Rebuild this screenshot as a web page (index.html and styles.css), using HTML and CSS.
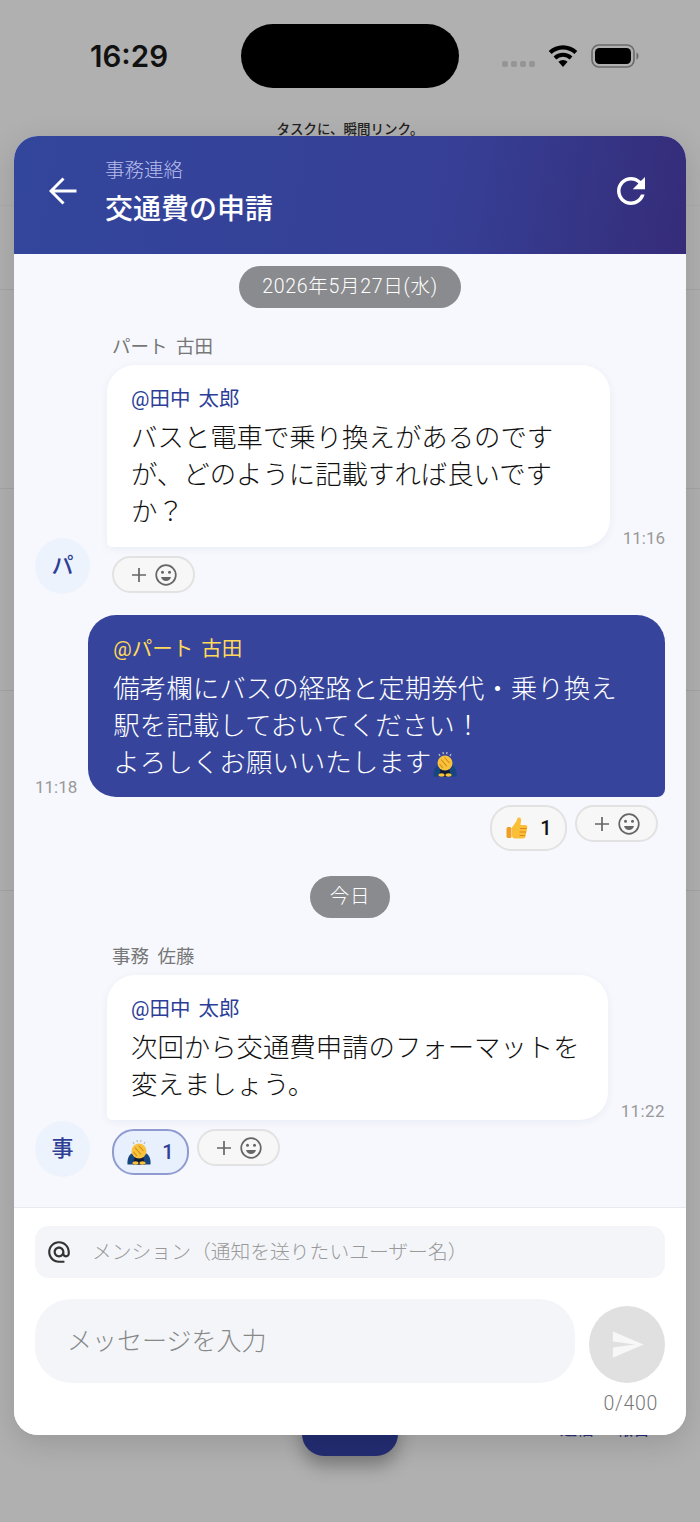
FILE: index.html
```html
<!DOCTYPE html>
<html lang="ja">
<head>
<meta charset="utf-8">
<title>交通費の申請</title>
<link rel="stylesheet" href="styles.css">
</head>
<body>
<div class="page">
  <div class="backdrop">
    <p class="tagline">タスクに、瞬間リンク。</p>
    <div class="rule rule-a"></div>
    <div class="rule rule-b"></div>
    <div class="rule rule-c"></div>
    <div class="rule rule-d"></div>
    <div class="rule rule-e"></div>
    <div class="nav-links"><span>通信</span><span>報告</span></div>
    <div class="fab"></div>
  </div>

  <header class="statusbar">
    <span class="clock">16:29</span>
    <span class="island"></span>
    <span class="signal"><i></i><i></i><i></i><i></i></span>
    <svg class="wifi" viewBox="0 0 30 22" width="30" height="22"><path d="M15 22l-4.600-5.200a6.600 6.600 0 0 1 9.200 0z"/><path d="M8.300 14.400l-2.700-3a13.600 13.600 0 0 1 18.800 0l-2.700 3a9.700 9.700 0 0 0-13.400 0z"/><path d="M3.600 9.100L.7 5.900a20.600 20.600 0 0 1 28.600 0l-2.900 3.200a16.400 16.400 0 0 0-22.800 0z"/></svg>
    <svg class="battery" viewBox="0 0 48 24" width="48" height="24"><rect x="1" y="1" width="42" height="22" rx="7" fill="none" stroke="#6a6a6a" stroke-width="1.600"/><rect x="4" y="4" width="36" height="16" rx="4.500" fill="#000"/><path d="M45.500 8.500c1.500.6 2 2 2 3.500s-.5 2.900-2 3.500z" fill="#6a6a6a"/></svg>
  </header>

  <main class="sheet">
    <div class="sheet-head">
      <svg class="back" viewBox="0 0 28 28" width="28" height="28"><path d="M27.500 14H2M14.500 1.500L2 14l12.500 12.500" fill="none" stroke="#fff" stroke-width="3"/></svg>
      <div class="head-text">
        <div class="head-sub">事務連絡</div>
        <h1 class="head-title">交通費の申請</h1>
      </div>
      <svg class="refresh" viewBox="0 0 24 24" width="42" height="42"><path fill="#fff" d="M17.650 6.350C16.200 4.900 14.210 4 12 4c-4.420 0-7.990 3.580-7.990 8s3.570 8 7.990 8c3.730 0 6.840-2.550 7.730-6h-2.080c-.82 2.330-3.040 4-5.650 4-3.310 0-6-2.690-6-6s2.690-6 6-6c1.660 0 3.140.69 4.220 1.780L13 11h7V4l-2.350 2.350z"/></svg>
    </div>

    <section class="thread">
      <div class="day"><span class="day-pill">2026年5月27日(水)</span></div>

      <article class="msg-in">
        <div class="avatar">パ</div>
        <div class="msg-col">
          <div class="sender">パート 古田</div>
          <div class="bubble-row">
            <div class="bubble bubble-in">
              <div class="mention">@田中 太郎</div>
              <div class="body">バスと電車で乗り換えがあるのですが、どのように記載すれば良いですか？</div>
            </div>
            <time class="time">11:16</time>
          </div>
          <div class="reactions">
            <span class="pill pill-add">
              <svg viewBox="0 0 46 24" width="46" height="24"><use href="#add-smile"/></svg>
            </span>
          </div>
        </div>
      </article>

      <article class="msg-out">
        <div class="bubble-row">
          <time class="time">11:18</time>
          <div class="bubble bubble-out">
            <div class="mention mention-out">@パート 古田</div>
            <div class="body">備考欄にバスの経路と定期券代・乗り換え駅を記載しておいてください！<br>よろしくお願いいたします<svg class="emoji-inline" viewBox="0 0 24 26" width="24" height="26"><use href="#bow"/></svg></div>
          </div>
        </div>
        <div class="reactions reactions-out">
          <span class="pill pill-count">
            <svg viewBox="0 0 24 24" width="24" height="24"><use href="#thumb"/></svg>
            <b>1</b>
          </span>
          <span class="pill pill-add">
            <svg viewBox="0 0 46 24" width="46" height="24"><use href="#add-smile"/></svg>
          </span>
        </div>
      </article>

      <div class="day"><span class="day-pill day-pill-short">今日</span></div>

      <article class="msg-in">
        <div class="avatar">事</div>
        <div class="msg-col">
          <div class="sender">事務 佐藤</div>
          <div class="bubble-row">
            <div class="bubble bubble-in">
              <div class="mention">@田中 太郎</div>
              <div class="body">次回から交通費申請のフォーマットを変えましょう。</div>
            </div>
            <time class="time time-wide">11:22</time>
          </div>
          <div class="reactions">
            <span class="pill pill-count pill-mine">
              <svg viewBox="0 0 24 26" width="24" height="26"><use href="#bow"/></svg>
              <b>1</b>
            </span>
            <span class="pill pill-add">
              <svg viewBox="0 0 46 24" width="46" height="24"><use href="#add-smile"/></svg>
            </span>
          </div>
        </div>
      </article>
    </section>

    <footer class="composer">
      <div class="mention-field">
        <svg viewBox="0 0 24 24" width="26" height="26"><path fill="#333" d="M12 2C6.480 2 2 6.480 2 12s4.480 10 10 10h5v-2h-5c-4.340 0-8-3.660-8-8s3.660-8 8-8 8 3.660 8 8v1.430c0 .79-.71 1.570-1.500 1.570s-1.500-.78-1.500-1.570V12c0-2.760-2.240-5-5-5s-5 2.240-5 5 2.240 5 5 5c1.380 0 2.640-.56 3.540-1.470.65.89 1.770 1.470 2.960 1.470 1.970 0 3.500-1.600 3.500-3.570V12c0-5.520-4.480-10-10-10zm0 13c-1.660 0-3-1.340-3-3s1.340-3 3-3 3 1.340 3 3-1.340 3-3 3z"/></svg>
        <span>メンション（通知を送りたいユーザー名）</span>
      </div>
      <div class="input-row">
        <div class="message-field">メッセージを入力</div>
        <div class="send">
          <svg viewBox="0 0 24 24" width="35" height="35"><path fill="#f7f7f7" d="M2.010 21L23 12 2.010 3 2 10l15 2-15 2z"/></svg>
        </div>
      </div>
      <div class="counter">0/400</div>
    </footer>
  </main>

  <svg class="defs" width="0" height="0" aria-hidden="true">
    <defs>
      <g id="add-smile">
        <path d="M8 5v14M1 12h14" stroke="#666" stroke-width="1.700" fill="none"/>
        <circle cx="35" cy="12" r="9.800" fill="none" stroke="#666" stroke-width="1.700"/>
        <circle cx="31.500" cy="9.300" r="1.500" fill="#666"/>
        <circle cx="38.500" cy="9.300" r="1.500" fill="#666"/>
        <path d="M30 14h10c-.7 2.600-2.600 4-5 4s-4.300-1.400-5-4z" fill="#666"/>
      </g>
      <g id="thumb">
        <rect x="1.500" y="11" width="5" height="11" rx="1.500" fill="#f0a020"/>
        <path d="M7 11.500L11.500 5c.6-1.500.5-3 2-3.500 1.700-.4 2.800 1 2.600 2.800L15.500 9H20c2 0 2.700 1.800 2.200 3.200l-1.700 8.300c-.3 1.300-1.200 2-2.500 2H10c-1.800 0-3-1-3-2.500z" fill="#fbbf37"/>
        <path d="M15 12.500h6.500M14.500 16h6.500M14.500 19.500h5.500" stroke="#d98a1c" stroke-width="1.100" fill="none"/>
      </g>
      <g id="bow">
        <path d="M6 3l1 2M10 1l.4 2.200M14 1l-.4 2.200M18 3l-1 2" stroke="#bdbdbd" stroke-width="1.300" fill="none"/>
        <path d="M.5 25.500c-.5-5 1.200-10.500 5.500-11.500h12c4.300 1 6 6.500 5.500 11.500z" fill="#17457f"/>
        <path d="M6 25.500l2-8h8l2 8z" fill="#0f1a33"/>
        <circle cx="12" cy="12" r="7.500" fill="#f9c23c"/>
        <path d="M8 8.500l6 7M11.500 6.500l5 5.500M6.500 13l3.500 4" stroke="#d08a16" stroke-width="1.100" fill="none"/>
        <ellipse cx="8.500" cy="24" rx="3" ry="1.700" fill="#f9c23c"/>
        <ellipse cx="15.500" cy="24" rx="3" ry="1.700" fill="#f9c23c"/>
      </g>
    </defs>
  </svg>
</div>
</body>
</html>
```
FILE: styles.css
```css
* { box-sizing: border-box; }
html, body { margin: 0; padding: 0; }
body {
  font-family: Roboto, "Noto Sans CJK JP", sans-serif;
  color: #222;
}
.page {
  position: relative;
  width: 700px;
  height: 1522px;
  overflow: hidden;
  background: #b0b0b0;
}
.defs { position: absolute; }

/* Dimmed page behind the sheet */
.backdrop { position: absolute; inset: 0; }
.tagline {
  margin: 0;
  padding-top: 119px;
  height: 205px;
  text-align: center;
  font-size: 13.500px;
  line-height: 20px;
  font-weight: 500;
  color: #222;
}
.rule { height: 1px; background: #a4a4a4; }
.rule-a { background: #aaa; }
.rule-b { margin-top: 83px; }
.rule-c { margin-top: 198px; }
.rule-d { margin-top: 201px; }
.rule-e { margin-top: 199px; }
.nav-links {
  display: flex;
  justify-content: flex-end;
  gap: 22px;
  margin-top: 528px;
  padding-right: 50px;
  font-size: 17px;
  line-height: 20px;
  color: #232d72;
}
.fab {
  width: 96px;
  height: 110px;
  margin: -2px auto 0;
  border-radius: 0 0 22px 22px;
  background: #232d72;
  box-shadow: 0 10px 18px rgba(0, 0, 0, .3);
  transform: translateY(-91px);
}

/* Status bar */
.statusbar {
  position: relative;
  display: flex;
  align-items: center;
  height: 136px;
  padding: 24px 0 48px 90px;
}
.clock {
  width: 151px;
  font-family: Inter, "Liberation Sans", sans-serif;
  font-size: 29.500px;
  font-weight: 600;
  color: #111;
}
.island {
  width: 218px;
  height: 64px;
  border-radius: 32px;
  background: #000;
}
.signal {
  display: flex;
  gap: 3px;
  margin: 16px 0 0 43px;
}
.signal i {
  width: 6px;
  height: 6px;
  border-radius: 2px;
  background: #959595;
}
.wifi { margin: 0 0 0 13px; }
.battery { margin-left: 13px; }

/* Sheet */
.sheet {
  position: relative;
  width: 672px;
  margin-left: 14px;
  border-radius: 24px;
  overflow: hidden;
  background: #fff;
  box-shadow: 0 8px 30px rgba(0, 0, 0, .14);
}
.sheet-head {
  display: flex;
  align-items: flex-start;
  height: 118px;
  padding: 22px 34px 0 35px;
  background: linear-gradient(100deg, #32469c 0%, #363f95 65%, #352c79 100%);
  color: #fff;
}
.back { margin-top: 19px; flex: none; }
.head-text { flex: 1; margin-left: 28px; }
.head-sub {
  font-size: 19.500px;
  font-weight: 300;
  line-height: 24px;
  margin-top: 1px;
  color: #b7bcec;
}
.head-title {
  margin: 8px 0 0;
  font-size: 28px;
  line-height: 38px;
  font-weight: 500;
}
.refresh { flex: none; margin-top: 12px; }

/* Thread */
.thread {
  padding: 12px 21px 30px;
  background: #f6f8fd;
  border-bottom: 1px solid #e8e9ee;
}
.day { display: flex; justify-content: center; }
.day-pill {
  height: 42px;
  padding: 0 23px;
  border-radius: 21px;
  background: #8a8b8e;
  color: #fff;
  font-size: 19.500px;
  font-weight: 300;
  line-height: 42px;
  letter-spacing: .7px;
}
.day-pill-short { padding: 0 20px; }
.msg-in {
  display: flex;
  align-items: flex-end;
  gap: 22px;
  margin-top: 25px;
}
.avatar {
  flex: none;
  width: 55px;
  height: 56px;
  border-radius: 50%;
  background: #edf3fd;
  color: #2f3f95;
  font-size: 22px;
  font-weight: 500;
  line-height: 56px;
  text-align: center;
}
.msg-col { flex: 1; min-width: 0; }
.sender {
  height: 28px;
  margin-bottom: 4px;
  font-size: 18.500px;
  line-height: 28px;
  word-spacing: 4px;
  color: #777;
}
.bubble-row {
  display: flex;
  align-items: flex-end;
  gap: 13px;
}
.msg-in .bubble-row { margin-left: -5px; }
.bubble {
  flex: 1;
  min-width: 0;
  padding: 19px 24px 16px;
  border-radius: 28px;
}
.bubble-in {
  border-bottom-left-radius: 5px;
  background: #fff;
  box-shadow: 0 2px 8px rgba(40, 50, 110, .06);
}
.bubble-out {
  padding-left: 25px;
  border-bottom-right-radius: 8px;
  background: #36459b;
  color: #fff;
}
.mention {
  height: 30px;
  margin-bottom: 6px;
  font-size: 20.500px;
  line-height: 30px;
  word-spacing: 3px;
  color: #2c3e98;
}
.mention-out { color: #ffd95a; }
.body {
  font-size: 26.400px;
  font-weight: 300;
  line-height: 37px;
  color: #111;
}
.bubble-out .body { color: #fff; font-size: 26.500px; }
.emoji-inline { vertical-align: -5px; margin-left: 2px; }
.time {
  flex: none;
  height: 22px;
  margin-bottom: -2px;
  font-size: 17px;
  line-height: 22px;
  color: #999;
}
.time-wide { letter-spacing: .4px; }
.msg-out .time { margin-bottom: -1px; }

/* Reactions */
.reactions {
  display: flex;
  align-items: flex-start;
  gap: 8px;
  margin-top: 9px;
  padding-bottom: 1px;
}
.reactions-out {
  justify-content: flex-end;
  margin-top: 8px;
  padding: 0 7px 0 0;
}
.pill {
  display: flex;
  align-items: center;
  justify-content: center;
  border-radius: 22px;
  border: 2px solid #e2e2e2;
  background: #f7f7f8;
}
.pill-add {
  width: 83px;
  height: 37px;
  border-radius: 19px;
}
.pill-count {
  gap: 11px;
  width: 77px;
  height: 46px;
  font-size: 20px;
  color: #111;
}
.pill-count b { font-weight: 500; }
.pill-mine {
  margin-bottom: 1px;
  border-color: #8f9bd0;
  background: #e9f0fd;
  color: #2f3f95;
}
.msg-out { margin-top: 21px; }
.msg-out + .day { margin-top: 25px; }
.msg-out .bubble-row { gap: 11px; }

/* Composer */
.composer { padding: 18px 21px 18px; background: #fff; }
.mention-field {
  display: flex;
  align-items: center;
  gap: 20px;
  height: 52px;
  padding-left: 11px;
  border-radius: 14px;
  background: #f3f5f9;
  font-size: 19.800px;
  font-weight: 300;
  line-height: 24px;
  color: #999;
}
.mention-field span { margin-top: 2px; }
.input-row {
  display: flex;
  align-items: flex-end;
  gap: 14px;
  margin-top: 21px;
}
.message-field {
  flex: 1;
  height: 84px;
  padding-left: 32px;
  border-radius: 36px;
  background: #f3f5f9;
  font-size: 25px;
  font-weight: 300;
  line-height: 86px;
  color: #888;
}
.send {
  display: flex;
  align-items: center;
  justify-content: center;
  flex: none;
  width: 76px;
  height: 77px;
  border-radius: 50%;
  background: #e0e0e0;
}
.counter {
  margin-top: 8px;
  padding-right: 7px;
  text-align: right;
  font-size: 19.500px;
  font-weight: 300;
  line-height: 26px;
  letter-spacing: .7px;
  color: #777;
}
```
